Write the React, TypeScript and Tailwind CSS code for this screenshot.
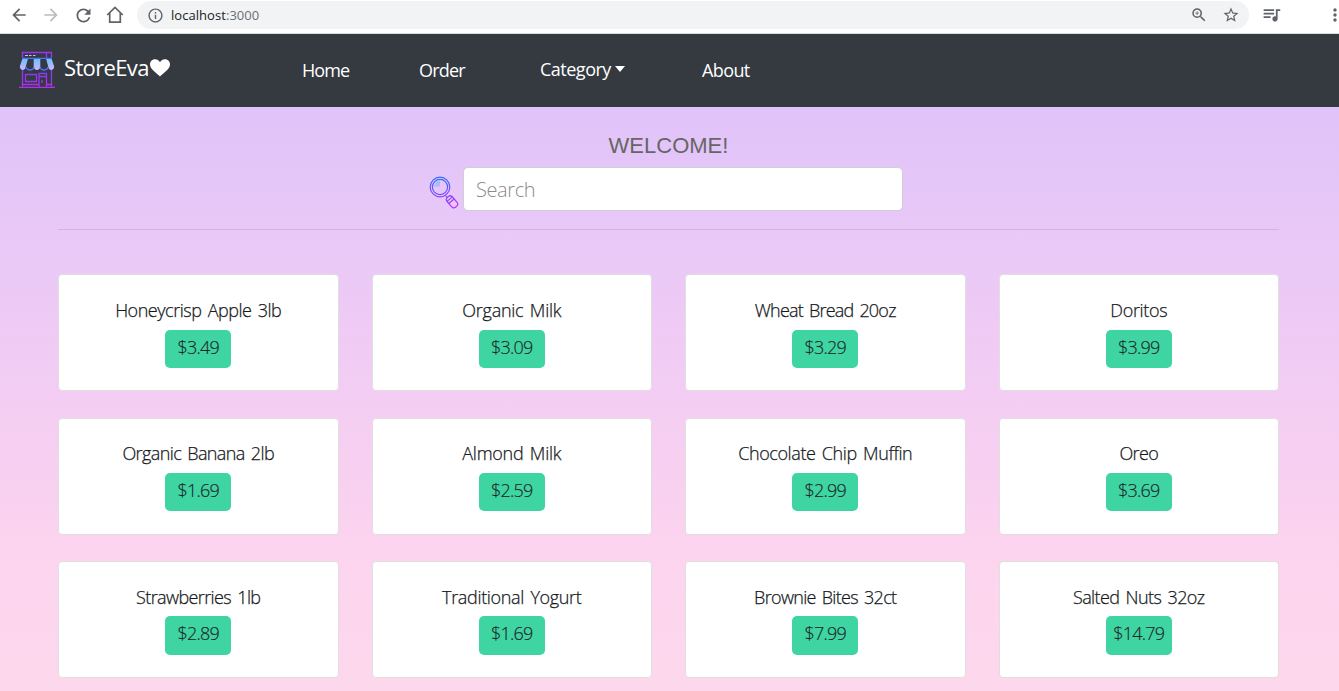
import React from "react";
import { MdArrowBack, MdArrowForward, MdRefresh, MdInfoOutline, MdStarBorder, MdOutlineZoomIn, MdOutlineQueueMusic, MdMoreVert } from "react-icons/md";

const products = [
  { name: "Honeycrisp Apple 3lb", price: "$3.49", track: "tracking-[-0.47px]" },
  { name: "Organic Milk", price: "$3.09", track: "tracking-[-0.25px]" },
  { name: "Wheat Bread 20oz", price: "$3.29", track: "tracking-[-0.78px]" },
  { name: "Doritos", price: "$3.99", track: "tracking-[-0.35px]" },
  { name: "Organic Banana 2lb", price: "$1.69", track: "tracking-[-0.6px]" },
  { name: "Almond Milk", price: "$2.59", track: "tracking-[-0.25px]" },
  { name: "Chocolate Chip Muffin", price: "$2.99", track: "tracking-[-0.4px]" },
  { name: "Oreo", price: "$3.69", track: "tracking-[-0.65px]" },
  { name: "Strawberries 1lb", price: "$2.89", track: "tracking-[-0.6px]" },
  { name: "Traditional Yogurt", price: "$1.69", track: "tracking-[-0.33px]" },
  { name: "Brownie Bites 32ct", price: "$7.99", track: "tracking-[-0.68px]" },
  { name: "Salted Nuts 32oz", price: "$14.79", track: "tracking-[-0.57px]" },
];

function StoreLogo() {
  return (
    <svg width="36" height="37" viewBox="0 0 36 37" fill="none" className="shrink-0">
      <defs>
        <linearGradient id="awning" x1="0" y1="7" x2="0" y2="19" gradientUnits="userSpaceOnUse">
          <stop stopColor="#5fc4ff" />
          <stop offset="1" stopColor="#d3b1ff" />
        </linearGradient>
        <linearGradient id="frame" x1="0" y1="0" x2="0" y2="37" gradientUnits="userSpaceOnUse">
          <stop stopColor="#a42df5" />
          <stop offset=".35" stopColor="#7a4bff" />
          <stop offset=".6" stopColor="#8b38fa" />
          <stop offset="1" stopColor="#b62cf5" />
        </linearGradient>
      </defs>
      <path d="M3.500 7.500.8 15.500c0 4.500 6 4.500 6 0L9 7.500ZM14.700 7.500V15.500c0 4.500 6.600 4.500 6.600 0V7.500ZM27 7.500 29.200 15.500c0 4.500 6 4.500 6 0L32.500 7.500Z" fill="url(#awning)" />
      <path d="M7 16c1 4 7 4 8 0M21 16c1 4 7 4 8 0M3.500 7.300h29" stroke="#4c6fff" strokeWidth="1.300" />
      <path d="M3.500 7V1.500h29v5.500M27.500 1.500V7M3.500 19v16.500M32.500 19v16.500M0 36.300h36M3.500 33.500h16M27.500 33.500h5M6.500 23.500h11v7h-11ZM20 35.500v-13h7.500v13M20 25.500h7.500M23 29v3" stroke="url(#frame)" strokeWidth="1.300" />
      <path d="M6 4.500h3M10 4.500h2.500M14 4.500h2.500" stroke="#b8c7ff" strokeWidth="1.200" />
    </svg>
  );
}

function Magnifier() {
  return (
    <svg width="30" height="33" viewBox="0 0 30 33" fill="none" className="shrink-0">
      <defs>
        <linearGradient id="lens" x1="0" y1="0" x2="0" y2="32" gradientUnits="userSpaceOnUse">
          <stop stopColor="#2b73ff" />
          <stop offset=".55" stopColor="#7a49fb" />
          <stop offset="1" stopColor="#c52ff5" />
        </linearGradient>
        <linearGradient id="glint" x1="0" y1="5" x2="0" y2="11" gradientUnits="userSpaceOnUse">
          <stop stopColor="#7dc4ff" />
          <stop offset="1" stopColor="#cdb5ff" />
        </linearGradient>
      </defs>
      <path d="M5 11a6 6 0 0 1 6-6v6Z" fill="url(#glint)" />
      <g stroke="url(#lens)" strokeWidth="1.200">
        <circle cx="11" cy="11" r="9.800" />
        <circle cx="11" cy="11" r="7.600" />
        <path d="m16.500 19.500 2 2.500" />
        <g transform="rotate(-40 23 26)">
          <rect x="19.600" y="19.500" width="7" height="12.800" rx="3" />
          <path d="M19.600 22.300h7M19.600 25h7" />
        </g>
      </g>
    </svg>
  );
}

export default function App() {
  return (
    <div className="flex h-[691px] w-[1339px] flex-col overflow-hidden font-['Open_Sans','Noto_Sans',sans-serif]">
      <div className="flex h-[34px] shrink-0 items-start border-b border-[#dadce0] bg-white text-[#5f6368]">
        <div className="flex h-[30px] w-[137px] shrink-0 items-center gap-[12px] pl-[9px]">
          <MdArrowBack size={20} />
          <MdArrowForward size={20} className="text-[#babcbe]" />
          <MdRefresh size={21} className="-mr-px" />
          <svg width="20" height="20" viewBox="0 0 20 20" fill="none" stroke="currentColor" strokeWidth="1.700" className="shrink-0">
            <path d="M2.200 10 10 2.500 17.800 10M4.700 8v9.200h10.600V8" />
          </svg>
        </div>
        <div className="mt-px flex h-7 w-[1112px] shrink-0 items-center rounded-full bg-[#f1f3f4] pr-[9px] pl-[10px]">
          <MdInfoOutline size={17} className="-mr-px" />
          <span className="ml-2 text-[13px] leading-7 tracking-[0.05px] text-[#6b6f74]"><span className="text-[#202124]">localhost</span>:3000</span>
          <MdOutlineZoomIn size={18} className="ml-auto" />
          <MdStarBorder size={18} className="ml-[14px]" />
        </div>
        <MdOutlineQueueMusic size={21} className="mt-[4px] ml-[12px] shrink-0" />
        <MdMoreVert size={20} className="mt-[5px] ml-[43px] shrink-0" />
      </div>

      <nav className="flex h-[73px] shrink-0 items-start bg-[#343a40] pl-[19px] text-[18px] text-white">
        <div className="flex w-[283px] shrink-0 pt-[17px]">
          <StoreLogo />
          <span className="ml-[9px] text-[22px] leading-[33px] tracking-[-0.65px]">StoreEva</span>
          <svg width="22" height="20" viewBox="0 0 22 20" className="mt-[7px] shrink-0" fill="white">
            <path d="M11 18.500C8 15 1 11.500 1 6.200 1 1 8.500-.8 11 4.300 13.500-.8 21 1 21 6.200 21 11.500 14 15 11 18.500Z" />
          </svg>
        </div>
        <span className="w-[117px] pt-[23px] leading-[27px] tracking-[-0.9px]">Home</span>
        <span className="w-[121px] pt-[23px] leading-[27px] tracking-[-0.8px]">Order</span>
        <span className="flex w-[162px] pt-[22px] leading-[27px] tracking-[-0.5px]">
          Category
          <span className="mt-[10px] ml-[4px] h-0 border-x-[5.500px] border-t-[6px] border-x-transparent border-t-white" />
        </span>
        <span className="pt-[23px] leading-[27px] tracking-[-0.6px]">About</span>
      </nav>

      <main className="flex-1 bg-[linear-gradient(180deg,#e0c3fa_0%,#e9c8f7_22%,#f3cdf3_50%,#fcd4ef_76%,#fdd8ec_100%)] pt-[25px] pr-[60px] pl-[58px]">
        <h1 className="text-center font-['Liberation_Sans',Arial,sans-serif] text-[22px] leading-7 text-[#666]">WELCOME!</h1>
        <div className="mt-[7px] flex pl-[371px]">
          <div className="w-[34px] pt-[9px]"><Magnifier /></div>
          <div className="h-[44px] w-[440px] rounded-[5px] border border-[#ced0d4] bg-white px-3 text-[20px] leading-[43px] font-light tracking-[-0.4px] text-[#8b8b8b]">Search</div>
        </div>
        <div className="mt-[18px] h-px bg-[#d2b5df]" />
        <div className="mt-[44.250px] grid grid-cols-4 gap-x-[33px] gap-y-[26.300px]">
          {products.map((p) => (
            <div key={p.name} className="flex h-[117px] flex-col items-center rounded-[4px] border border-[#dfdfdf] bg-white pt-[21.900px] text-[18px] font-light text-[#212529]">
              <span className={"leading-[27px] text-[#16191c] [word-spacing:2px] [-webkit-text-stroke:0.25px_#16191c] " + p.track}>{p.name}</span>
              <span className="mt-[5.700px] flex h-[38.300px] w-[66px] shrink-0 justify-center rounded-[5px] bg-[#3ed5a2] leading-[35px] tracking-[-0.75px] [-webkit-text-stroke:0.15px_#212529]">{p.price}</span>
            </div>
          ))}
        </div>
      </main>
    </div>
  );
}
